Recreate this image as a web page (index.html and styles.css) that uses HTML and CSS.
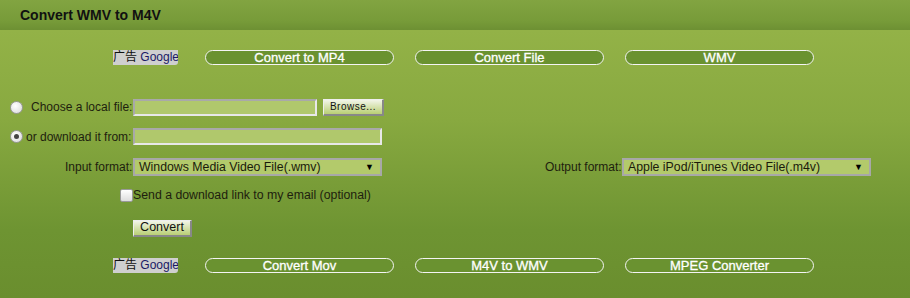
FILE: index.html
```html
<!DOCTYPE html>
<html lang="en">
<head>
    <meta charset="UTF-8">
    <title>Convert WMV to M4V</title>
    <link rel="stylesheet" href="styles.css">
</head>
<body>

<div class="header">Convert WMV to M4V</div>

<div class="links">
    <span class="ad">广告 <span class="g">Google</span></span>
    <a class="pill" href="#">Convert to MP4</a>
    <a class="pill" href="#">Convert File</a>
    <a class="pill" href="#">WMV</a>
</div>

<form class="form">
    <div class="row row-local">
        <span class="radio"></span>
        <label class="lbl lbl-local">Choose a local file:</label>
        <span class="field field-short"></span>
        <span class="btn btn-browse">Browse...</span>
    </div>
    <div class="row row-url">
        <span class="radio checked"></span>
        <label class="lbl lbl-url">or download it from:</label>
        <span class="field field-long"></span>
    </div>
    <div class="row row-format">
        <label class="lbl lbl-in">Input format:</label>
        <span class="select">Windows Media Video File(.wmv)<span class="arrow">&#9660;</span></span>
        <label class="lbl lbl-out">Output format:</label>
        <span class="select">Apple iPod/iTunes Video File(.m4v)<span class="arrow">&#9660;</span></span>
    </div>
    <div class="row row-mail">
        <span class="check"></span>
        <span class="lbl lbl-mail">Send a download link to my email (optional)</span>
    </div>
    <div class="row row-go">
        <span class="btn btn-go">Convert</span>
    </div>
</form>

<div class="links links-bottom">
    <span class="ad">广告 <span class="g">Google</span></span>
    <a class="pill" href="#">Convert Mov</a>
    <a class="pill" href="#">M4V to WMV</a>
    <a class="pill" href="#">MPEG Converter</a>
</div>

</body>
</html>
```

FILE: styles.css
```css
* {
    margin: 0;
    padding: 0;
    box-sizing: border-box;
}

body {
    font-family: "Liberation Sans", Arial, "Noto Sans CJK SC", sans-serif;
    font-size: 12px;
    color: #1e1e0e;
    width: 910px;
    height: 298px;
    overflow: hidden;
    background: linear-gradient(to bottom, #93b247 30px, #88a940 120px, #6e9432 230px, #6a8e2e);
}

/* Title bar */
.header {
    height: 30px;
    line-height: 30px;
    padding-left: 20px;
    font-weight: bold;
    font-size: 14px;
    color: #111;
    background: linear-gradient(to bottom, #82a441, #779b39 70%, #6d9033);
}

/* Link rows */
.links {
    display: flex;
    align-items: center;
    height: 15px;
    margin-top: 20px;
    padding-left: 113px;
}

.links-bottom {
    margin-top: 21px;
}

.ad {
    width: 65px;
    height: 15px;
    line-height: 15px;
    background: #cfcfcf;
    color: #111;
    font-size: 12px;
    white-space: nowrap;
    overflow: hidden;
    border-radius: 0 0 3px 0;
    margin-right: 27px;
}

.ad .g {
    color: #1a1a66;
}

.pill {
    width: 189px;
    height: 15px;
    line-height: 13px;
    margin-right: 21px;
    border: 1px solid #f4f4f4;
    border-radius: 8px;
    background: #6a9230;
    color: #fff;
    font-size: 13px;
    text-align: center;
    text-decoration: none;
    -webkit-text-stroke: 0.3px #fff;
}

/* Form */
.form {
    margin-top: 33px;
}

.row {
    display: flex;
    align-items: center;
}

.row-local {
    height: 18px;
    padding-left: 10px;
}

.row-url {
    height: 17px;
    margin-top: 12px;
    padding-left: 10px;
}

.row-format {
    height: 18px;
    margin-top: 13px;
    padding-left: 65px;
}

.row-mail {
    height: 14px;
    margin-top: 12px;
    padding-left: 120px;
}

.row-go {
    height: 18px;
    margin-top: 17px;
    padding-left: 133px;
}

.lbl {
    white-space: nowrap;
    font-size: 12px;
}

.lbl-local {
    width: 102px;
    margin-left: 5px;
}

.lbl-url {
    width: 107px;
}

.lbl-in {
    width: 68px;
}

.lbl-out {
    width: 77px;
    margin-left: 163px;
}

.lbl-mail {
    font-size: 12.3px;
}

.radio {
    width: 13px;
    height: 13px;
    border-radius: 50%;
    border: 1px solid #9a9a9a;
    background: radial-gradient(circle at 40% 35%, #ffffff, #d8d8d8);
    margin-right: 3px;
    position: relative;
}

.radio.checked::after {
    content: "";
    position: absolute;
    left: 3px;
    top: 3px;
    width: 5px;
    height: 5px;
    border-radius: 50%;
    background: #444;
}

.field {
    height: 17px;
    background: #b0c86c;
    border: 2px solid #a9a9a9;
    border-right-color: #e8e8e8;
    border-bottom-color: #e8e8e8;
}

.field-short {
    width: 184px;
}

.field-long {
    width: 249px;
}

.btn {
    height: 17px;
    line-height: 13px;
    padding: 0 6px;
    border: 1px solid #888;
    border-top-color: #eee;
    border-left-color: #eee;
    border-right-width: 2px;
    border-bottom-width: 2px;
    background: linear-gradient(to bottom, #f2f5e8, #b9cf74);
    color: #111;
}

.btn-browse {
    width: 61px;
    margin-left: 6px;
    padding: 0;
    font-size: 10px;
    text-align: center;
    letter-spacing: 0.5px;
}

.btn-go {
    width: 59px;
    text-align: center;
    font-size: 12.5px;
}

.select {
    position: relative;
    width: 249px;
    height: 18px;
    line-height: 14px;
    padding-left: 4px;
    background: #b3ca6b;
    border: 2px solid #a8a8a8;
    color: #1a1a0a;
    font-size: 12.3px;
    white-space: nowrap;
}

.arrow {
    position: absolute;
    right: 6px;
    top: 0;
    font-size: 9px;
    color: #000;
}

.check {
    width: 13px;
    height: 13px;
    border: 1px solid #999;
    border-radius: 2px;
    background: linear-gradient(to bottom, #fff, #ddd);
}
```
